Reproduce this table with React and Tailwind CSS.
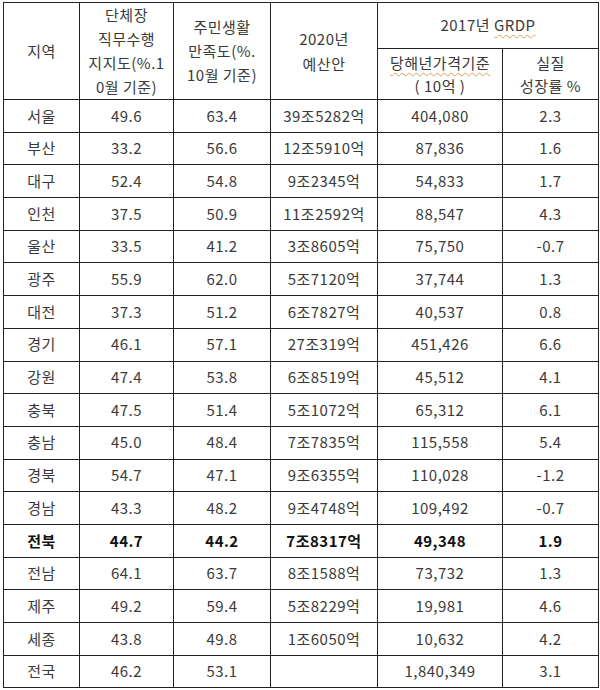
import React from "react";

const rows = [
  ["서울", "49.6", "63.4", "39조5282억", "404,080", "2.3"],
  ["부산", "33.2", "56.6", "12조5910억", "87,836", "1.6"],
  ["대구", "52.4", "54.8", "9조2345억", "54,833", "1.7"],
  ["인천", "37.5", "50.9", "11조2592억", "88,547", "4.3"],
  ["울산", "33.5", "41.2", "3조8605억", "75,750", "-0.7"],
  ["광주", "55.9", "62.0", "5조7120억", "37,744", "1.3"],
  ["대전", "37.3", "51.2", "6조7827억", "40,537", "0.8"],
  ["경기", "46.1", "57.1", "27조319억", "451,426", "6.6"],
  ["강원", "47.4", "53.8", "6조8519억", "45,512", "4.1"],
  ["충북", "47.5", "51.4", "5조1072억", "65,312", "6.1"],
  ["충남", "45.0", "48.4", "7조7835억", "115,558", "5.4"],
  ["경북", "54.7", "47.1", "9조6355억", "110,028", "-1.2"],
  ["경남", "43.3", "48.2", "9조4748억", "109,492", "-0.7"],
  ["전북", "44.7", "44.2", "7조8317억", "49,348", "1.9"],
  ["전남", "64.1", "63.7", "8조1588억", "73,732", "1.3"],
  ["제주", "49.2", "59.4", "5조8229억", "19,981", "4.6"],
  ["세종", "43.8", "49.8", "1조6050억", "10,632", "4.2"],
  ["전국", "46.2", "53.1", "", "1,840,349", "3.1"],
];

const cell = "border border-[#222] text-center align-middle p-0";

export default function App() {
  return (
    <div className="w-[600px] h-[690px] bg-white pt-[2px] pl-[3px] text-[#3a3a3a] text-[15px] tracking-[0.5px] font-['Noto_Sans_CJK_KR','Noto_Sans',sans-serif]">
      <table className="border-collapse table-fixed w-[595px]">
        <colgroup>
          <col className="w-[76px]" />
          <col className="w-[94px]" />
          <col className="w-[97px]" />
          <col className="w-[107px]" />
          <col className="w-[125px]" />
          <col className="w-[96px]" />
        </colgroup>
        <thead>
          <tr className="h-[45px]">
            <th rowSpan={2} className={`${cell} font-normal`}>지역</th>
            <th rowSpan={2} className={`${cell} font-normal leading-[24px]`}>
              단체장<br />직무수행<br />지지도(%.1<br />0월 기준)
            </th>
            <th rowSpan={2} className={`${cell} font-normal leading-[24px]`}>
              주민생활<br />만족도(%.<br />10월 기준)
            </th>
            <th rowSpan={2} className={`${cell} font-normal leading-[25px]`}>
              2020년<br />예산안
            </th>
            <th colSpan={2} className={`${cell} font-normal`}>
              2017년{" "}
              <span className="underline decoration-wavy decoration-[#e0a050] decoration-1 underline-offset-[3px]">GRDP</span>
            </th>
          </tr>
          <tr className="h-[50px]">
            <th className={`${cell} font-normal leading-[23px]`}>
              <span className="underline decoration-wavy decoration-[#e0a050] decoration-1 underline-offset-[3px]">당해년가격기준</span>
              <br />( 10억 )
            </th>
            <th className={`${cell} font-normal leading-[23px]`}>
              실질<br />성장률 %
            </th>
          </tr>
        </thead>
        <tbody>
          {rows.map((r) => (
            <tr key={r[0]} className={`h-[32.7px] ${r[0] === "전북" ? "font-bold text-[#111]" : ""}`}>
              {r.map((v, i) => (
                <td key={i} className={cell}>{v}</td>
              ))}
            </tr>
          ))}
        </tbody>
      </table>
    </div>
  );
}
